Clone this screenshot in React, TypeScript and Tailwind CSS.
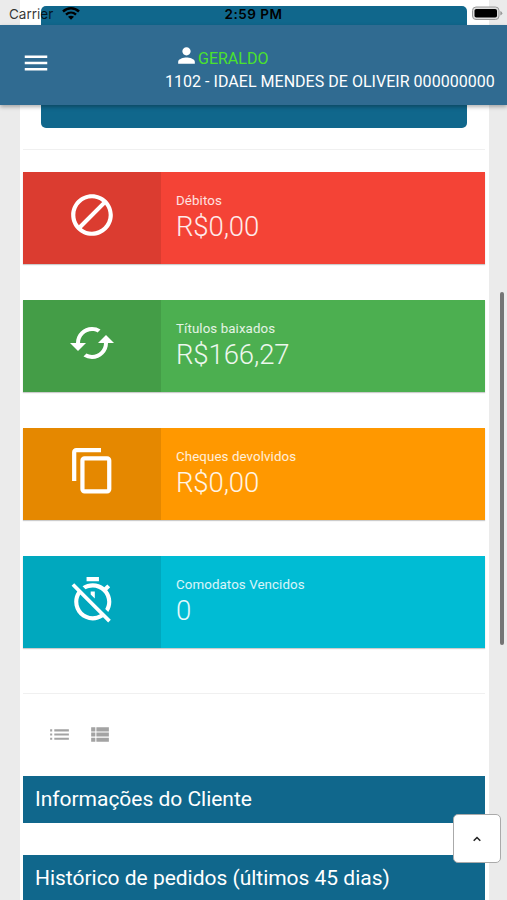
import type { ReactNode } from "react";
import { MdCached, MdDoNotDisturbAlt, MdMenu, MdPerson } from "react-icons/md";

type InfoBoxProps = {
  title: string;
  value: string;
  color: string;
  children: ReactNode;
};

const InfoBox = ({ title, value, color, children }: InfoBoxProps) => {
  return (
    <div
      className={`flex h-[92px] mb-[36.3px] shrink-0 text-white shadow-[0_1px_1px_rgba(0,0,0,0.2)] ${color}`}
    >
      <div className="w-[138px] h-[86px] flex-none bg-black/10 flex justify-center items-center box-content pb-[6px]">
        {children}
      </div>
      <div className="pl-[15px] pt-[19px]">
        <div className="text-[13.3px] leading-[20px] tracking-[0.1px] text-white/85">
          {title}
        </div>
        <div className="text-[27.5px] leading-[32px] font-light tracking-[-0.1px] text-white/90">
          {value}
        </div>
      </div>
    </div>
  );
};

const StatusBar = () => {
  return (
    <div className="absolute inset-x-0 top-0 h-[25px] flex items-center justify-between pl-[9px] pr-[4px] pt-[3px] text-black font-['Inter',sans-serif]">
      <div className="flex items-center w-[120px] gap-[9px]">
        <span className="text-[13.5px] leading-[20px] text-black/80">
          Carrier
        </span>
        <svg width="18" height="13" viewBox="0 0 18 13" className="-mt-[2px]">
          <path
            d="M1 4.5C5.6.2 12.400.2 17 4.500M4 7.600C6.900 4.900 11.100 4.900 14 7.600"
            fill="none"
            stroke="#000"
            strokeWidth="2.400"
          />
          <path d="M9 12.800L6 9.800C7.700 8.300 10.300 8.300 12 9.800Z" />
        </svg>
      </div>
      <span className="text-[13.5px] leading-[20px] font-semibold tracking-[0.5px]">
        2:59 PM
      </span>
      <div className="w-[125px] flex justify-end pb-[2px]">
        <svg width="32" height="15" viewBox="0 0 32 15">
          <rect
            x="1.500"
            y="1"
            width="26.500"
            height="12.500"
            rx="3.500"
            fill="#ddd"
            stroke="#999"
          />
          <rect x="3.500" y="3" width="22.500" height="8.500" rx="1.800" />
          <path d="M29.300 5v4.500q2-.7 2-2.250t-2-2.250z" fill="#999" />
        </svg>
      </div>
    </div>
  );
};

const Header = () => {
  return (
    <header className="absolute inset-x-0 top-[25px] h-[79.500px] bg-[#306b91] shadow-[0_2px_4px_rgba(0,0,0,0.3)] flex text-white">
      <MdMenu className="w-[30px] h-[30px] ml-[21px] mt-[23px] shrink-0" />
      <div className="ml-[114px] pt-[19px] whitespace-nowrap">
        <div className="flex h-[26px] pl-[9px]">
          <MdPerson className="w-[25px] h-[25px] -mt-[1px]" />
          <span className="text-[16px] leading-[30px] -ml-[1px] text-[#4be22d]">
            GERALDO
          </span>
        </div>
        <div className="text-[16px] leading-[23px] tracking-[0.03px]">
          1102 - IDAEL MENDES DE OLIVEIR 000000000
        </div>
      </div>
    </header>
  );
};

const SectionTitle = ({ children }: { children: ReactNode }) => {
  return (
    <h2 className="h-[47px] mb-[32px] pl-[12px] shrink-0 bg-[#10678c] text-white text-[21px] leading-[47px] tracking-[-0.02px] whitespace-nowrap">
      {children}
    </h2>
  );
};

const App = () => {
  return (
    <div className="relative h-[900px] w-[507px] overflow-hidden bg-[#ebebeb] font-['Roboto',sans-serif]">
      <main className="ml-[19.500px] w-[469px] h-full bg-white px-[3.500px] pt-[6px] flex flex-col">
        <div className="h-[122px] mx-[18px] rounded-[5px] bg-[#10678c] shrink-0"></div>
        <hr className="border-[#f0f0f0] mt-[20.500px] mb-[22px]" />
        <InfoBox title="Débitos" value="R$0,00" color="bg-[#f44336]">
          <MdDoNotDisturbAlt className="w-[50px] h-[50px]" />
        </InfoBox>
        <InfoBox title="Títulos baixados" value="R$166,27" color="bg-[#4caf50]">
          <MdCached className="w-[48px] h-[48px]" />
        </InfoBox>
        <InfoBox
          title="Cheques devolvidos"
          value="R$0,00"
          color="bg-[#ff9800]"
        >
          <svg
            className="w-[49.500px] h-[49.500px] ml-[2px]"
            viewBox="0 0 24 24"
            fill="none"
            stroke="currentColor"
            strokeWidth="2.050"
            strokeLinejoin="round"
          >
            <path d="M16 2H4a1 1 0 0 0-1 1v14" strokeLinecap="butt" />
            <rect x="7" y="6" width="13" height="16" rx="1" />
          </svg>
        </InfoBox>
        <InfoBox title="Comodatos Vencidos" value="0" color="bg-[#00bcd4]">
          <svg
            className="w-[49.500px] h-[49.500px] ml-[2px]"
            viewBox="0 0 24 24"
            fill="currentColor"
          >
            <path d="M19.040 4.550l-1.420 1.420C16.070 4.740 14.120 4 12 4c-1.830 0-3.530.550-4.950 1.480l1.460 1.460C9.530 6.350 10.730 6 12 6c3.870 0 7 3.130 7 7 0 1.270-.350 2.470-.940 3.490l1.450 1.450C20.450 16.530 21 14.830 21 13c0-2.120-.740-4.070-1.970-5.610l1.420-1.420-1.410-1.420zM15 1H9v2h6V1zm-4 8.440l2 2V8h-2v1.440zM3.020 4L1.750 5.270 4.500 8.030C3.550 9.450 3 11.160 3 13c0 4.970 4.020 9 9 9 1.840 0 3.550-.550 4.980-1.500l2.500 2.500 1.270-1.270-7.710-7.710L3.020 4zM12 20c-3.870 0-7-3.130-7-7 0-1.280.350-2.480.950-3.520l9.560 9.560c-1.030.610-2.230.960-3.510.960z" />
          </svg>
        </InfoBox>
        <hr className="border-[#f0f0f0] mt-[8px]" />
        <div className="flex gap-[15px] pl-[24px] pt-[28.300px] h-[82px] shrink-0 text-[#a3a3a3]">
          <svg
            className="w-[25px] h-[25px]"
            viewBox="0 0 24 24"
            fill="currentColor"
          >
            <path d="M3 13h2v-2H3v2zm0 4h2v-2H3v2zm0-8h2V7H3v2zm4 4h14v-2H7v2zm0 4h14v-2H7v2zM7 7v2h14V7H7z" />
          </svg>
          <svg
            className="w-[25px] h-[25px]"
            viewBox="0 0 24 24"
            fill="currentColor"
          >
            <path d="M4 14h4v-4H4v4zm0 5h4v-4H4v4zM4 9h4V5H4v4zm5 5h12v-4H9v4zm0 5h12v-4H9v4zM9 5v4h12V5H9z" />
          </svg>
        </div>
        <SectionTitle>Informações do Cliente</SectionTitle>
        <SectionTitle>Histórico de pedidos (últimos 45 dias)</SectionTitle>
      </main>

      <Header />
      <StatusBar />

      {/* scroll indicator */}
      <div className="absolute left-[499.500px] top-[292px] w-[4px] h-[353px] rounded-full bg-[#757575]"></div>

      <button className="absolute left-[453px] top-[814px] w-[48px] h-[49px] rounded-[5px] border border-[#aaaaaa] bg-white flex items-center justify-center">
        <svg width="8" height="6" viewBox="0 0 8 6">
          <path
            d="M.7 4.700L4 1.500l3.300 3.200"
            fill="none"
            stroke="#222"
            strokeWidth="1.600"
          />
        </svg>
      </button>
    </div>
  );
};

export default App;
